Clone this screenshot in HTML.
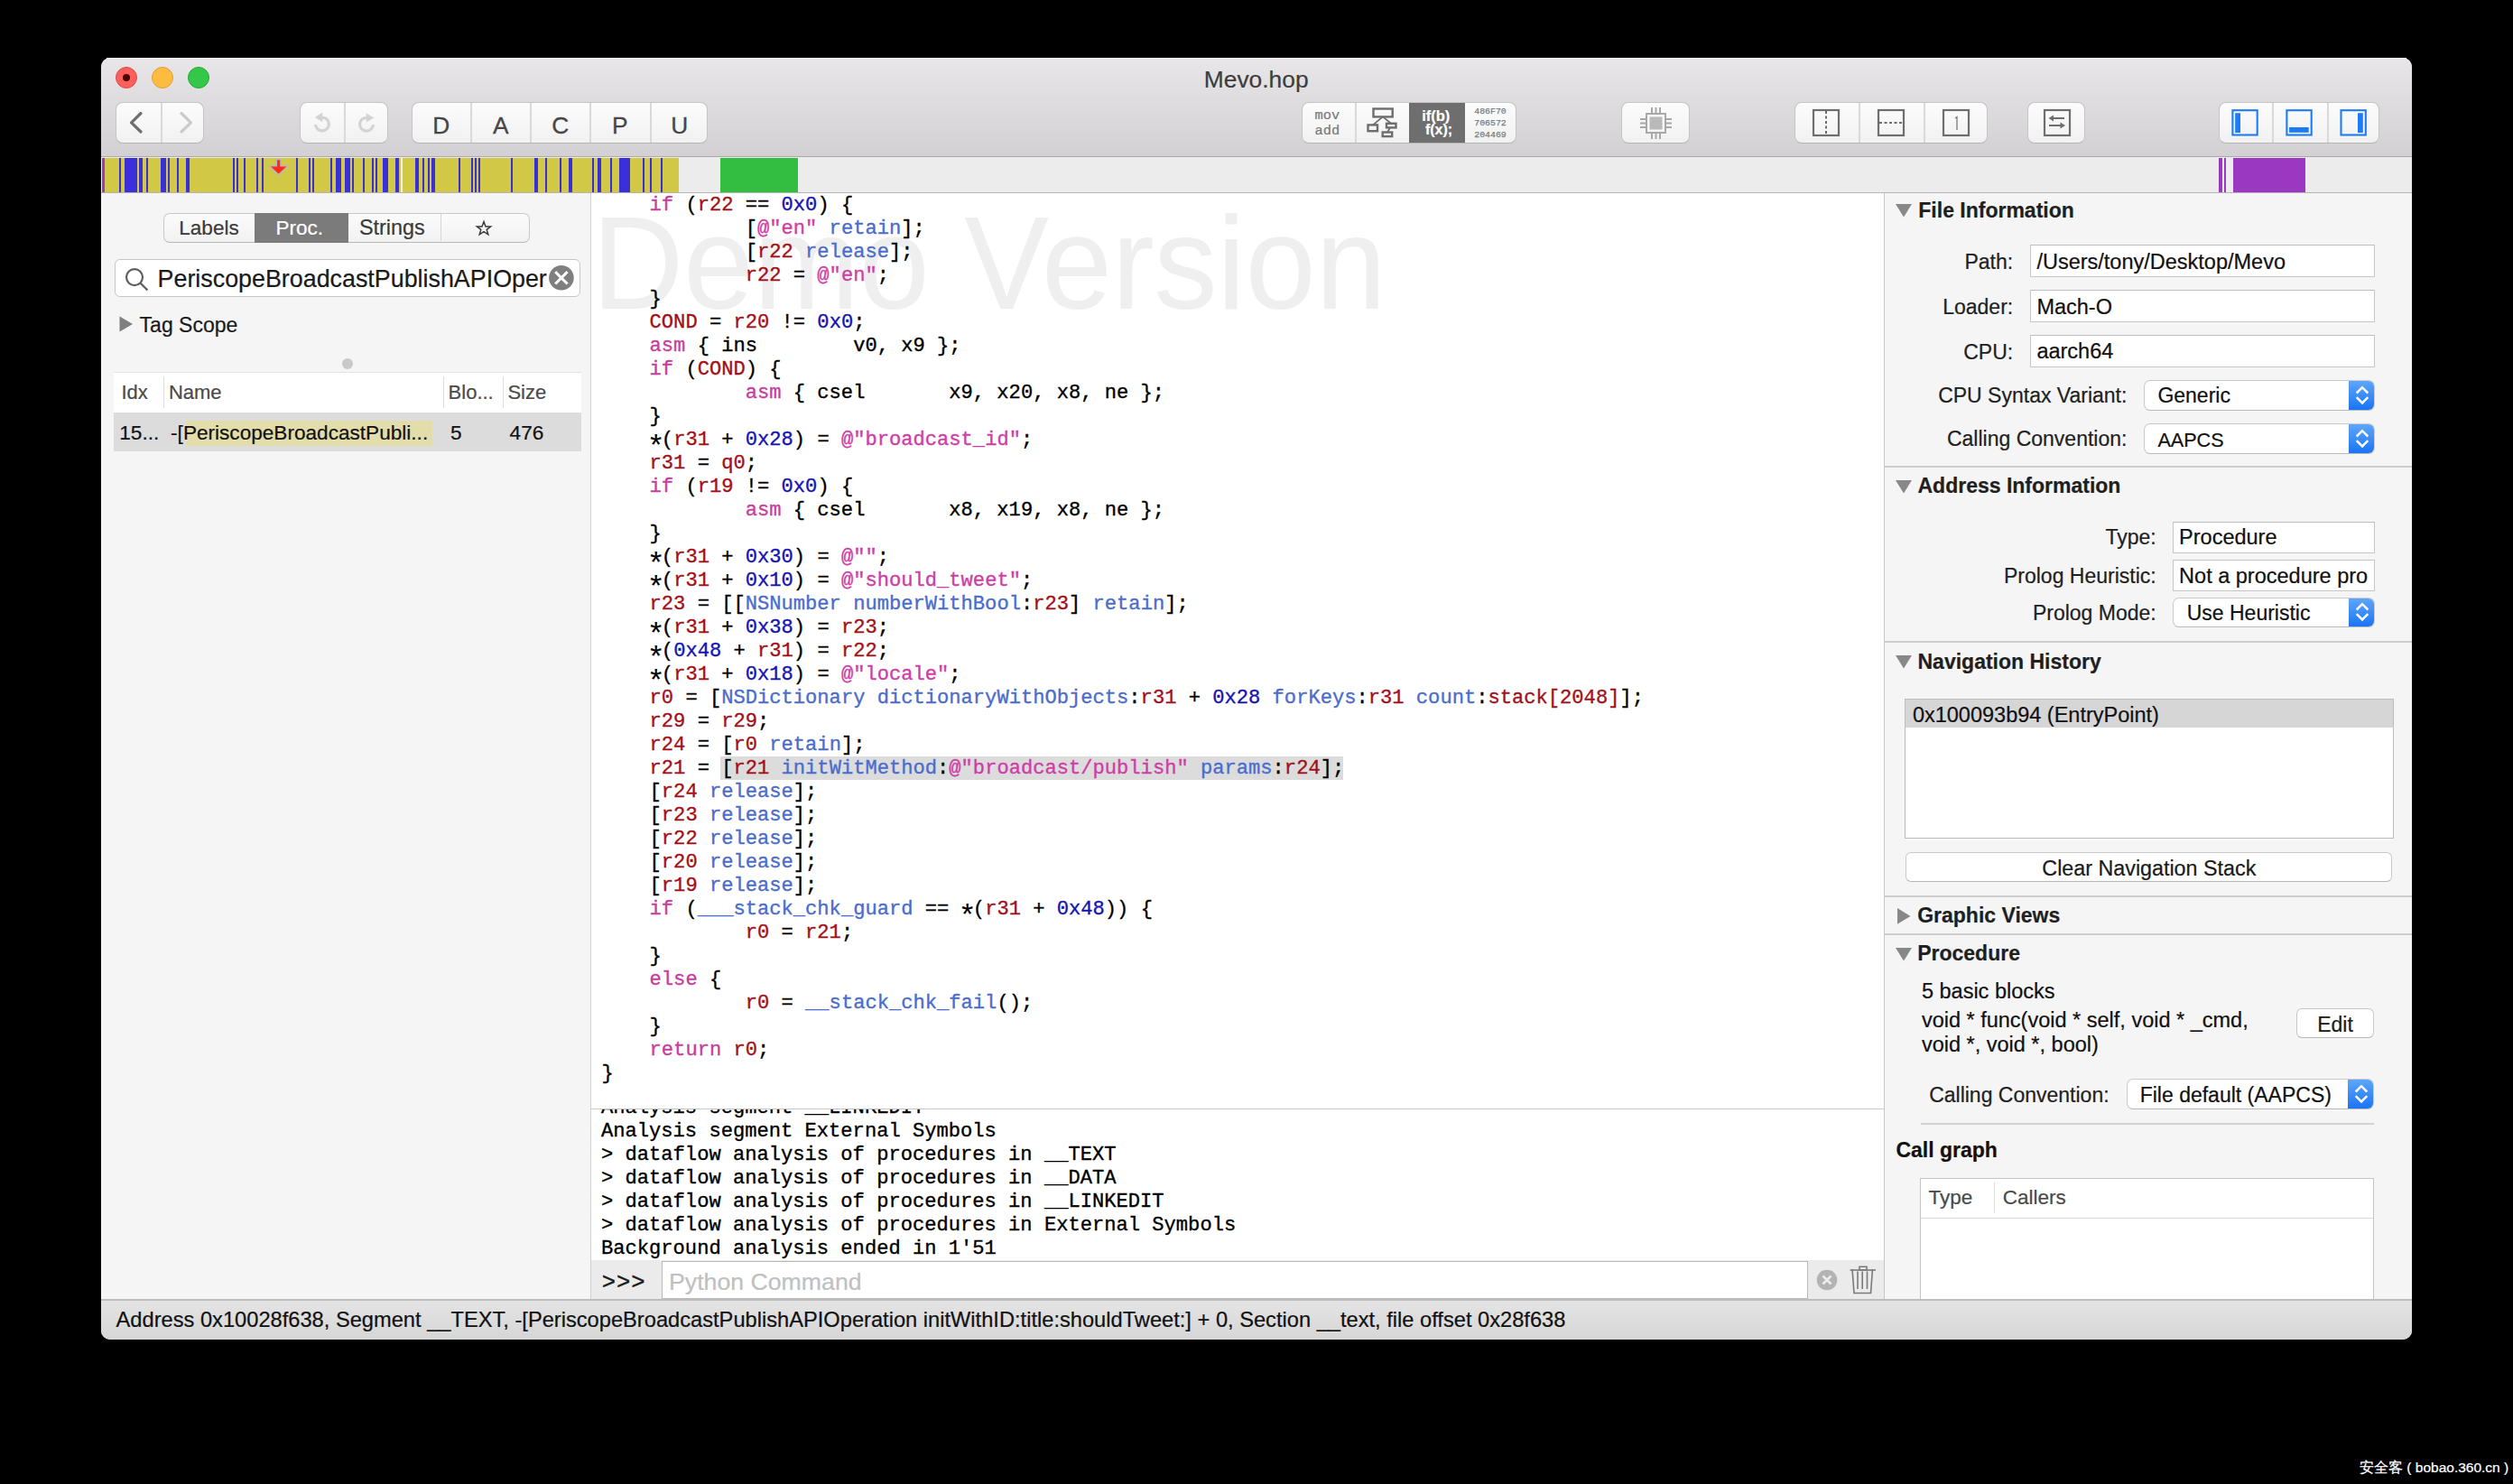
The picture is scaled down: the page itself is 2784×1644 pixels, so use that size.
<!DOCTYPE html><html><head><meta charset="utf-8"><style>
html,body{margin:0;padding:0;}
body{width:2784px;height:1644px;background:#000;position:relative;overflow:hidden;font-family:"Liberation Sans",sans-serif;}
.a{position:absolute;}
.t{position:absolute;white-space:pre;-webkit-text-stroke:0.22px currentColor;}
.btn{position:absolute;box-sizing:border-box;border:1px solid #c4c4c4;border-bottom-color:#b4b4b4;border-radius:8px;background:linear-gradient(#fcfcfc,#f1f1f1);}
.div{position:absolute;width:1px;background:#d6d6d6;}
.code{position:absolute;white-space:pre;font-family:"Liberation Mono",monospace;-webkit-text-stroke:0.35px currentColor;}
.ast{display:inline-block;transform-origin:50% 5.6px;transform:translateY(5.7px) scale(1.5);-webkit-text-stroke:0.1px currentColor;}
.k{color:#c83c9e}.r{color:#a30f17}.n{color:#1313b2}.m{color:#4a6ccd}.s{color:#d03ca6}
</style></head><body>

<div class="a" style="left:112px;top:64px;width:2560px;height:1420px;border-radius:10px;background:#f5f5f5;overflow:hidden;"></div>
<div class="a" style="left:112px;top:64px;width:2560px;height:110px;border-radius:10px 10px 0 0;background:linear-gradient(#e8e6e8,#d2d0d2);"></div>
<div class="a" style="left:118px;top:64px;width:2548px;height:1px;background:#f4f3f4;"></div>
<div class="a" style="left:112px;top:172.5px;width:2560px;height:2.0px;background:#aaa9aa;"></div>
<div class="a" style="left:128px;top:74px;width:24px;height:24px;box-sizing:border-box;border-radius:50%;background:#fc605c;border:1px solid #de4b47;"></div>
<div class="a" style="left:168px;top:74px;width:24px;height:24px;box-sizing:border-box;border-radius:50%;background:#fdbc40;border:1px solid #dea035;"></div>
<div class="a" style="left:208px;top:74px;width:24px;height:24px;box-sizing:border-box;border-radius:50%;background:#34c84a;border:1px solid #28a838;"></div>
<div class="a" style="left:136px;top:82px;width:8px;height:8px;border-radius:50%;background:#4d0000;"></div>
<div class="t" style="left:891.70px;width:1000px;text-align:center;top:74.65px;font-size:26.4px;line-height:26.4px;color:#3d3d3d;font-family:'Liberation Sans', sans-serif;">Mevo.hop</div>
<div class="btn" style="left:128px;top:113.2px;width:98px;height:45.39999999999999px;"></div>
<div class="div" style="left:177.5px;top:114.2px;width:2px;height:43.60000000000001px;background:#d9d9d9;"></div>
<svg class="a" style="left:141px;top:122px;" width="20" height="28" viewBox="0 0 20 28"><path d="M15 3.5 L4.5 13.8 L15 24" fill="none" stroke="#6e6e6e" stroke-width="3.2" stroke-linecap="round" stroke-linejoin="round"/></svg>
<svg class="a" style="left:196px;top:122px;" width="20" height="28" viewBox="0 0 20 28"><path d="M5 3.5 L15.5 13.8 L5 24" fill="none" stroke="#cbcbcb" stroke-width="3.2" stroke-linecap="round" stroke-linejoin="round"/></svg>
<div class="btn" style="left:331.6px;top:113.2px;width:98.39999999999998px;height:45.39999999999999px;"></div>
<div class="div" style="left:381.0px;top:114.2px;width:2px;height:43.60000000000001px;background:#d9d9d9;"></div>
<svg class="a" style="left:340px;top:118px;" width="80" height="36" viewBox="340 118 80 36"><g fill="none" stroke="#d3d3d3" stroke-width="3.2"><path d="M349.45 138 A7.45 7.45 0 1 0 357 130.05"/><path d="M413.45 138 A7.45 7.45 0 1 1 406 130.3"/></g><path d="M348.8 130 L357.2 124.8 L357.2 135.2 Z M414.2 130.5 L405.8 125.5 L405.8 135.5 Z" fill="#d3d3d3"/></svg>
<div class="btn" style="left:455.7px;top:113.2px;width:327.90000000000003px;height:45.39999999999999px;"></div>
<div class="div" style="left:521.3px;top:114.2px;width:2px;height:43.60000000000001px;background:#d9d9d9;"></div>
<div class="div" style="left:587.3px;top:114.2px;width:2px;height:43.60000000000001px;background:#d9d9d9;"></div>
<div class="div" style="left:653.4px;top:114.2px;width:2px;height:43.60000000000001px;background:#d9d9d9;"></div>
<div class="div" style="left:719.5px;top:114.2px;width:2px;height:43.60000000000001px;background:#d9d9d9;"></div>
<div class="t" style="left:-11.30px;width:1000px;text-align:center;top:125.53px;font-size:26.3px;line-height:26.3px;color:#474747;font-family:'Liberation Sans', sans-serif;-webkit-text-stroke:0.3px #474747;">D</div>
<div class="t" style="left:54.70px;width:1000px;text-align:center;top:125.53px;font-size:26.3px;line-height:26.3px;color:#474747;font-family:'Liberation Sans', sans-serif;-webkit-text-stroke:0.3px #474747;">A</div>
<div class="t" style="left:120.70px;width:1000px;text-align:center;top:125.53px;font-size:26.3px;line-height:26.3px;color:#474747;font-family:'Liberation Sans', sans-serif;-webkit-text-stroke:0.3px #474747;">C</div>
<div class="t" style="left:186.70px;width:1000px;text-align:center;top:125.53px;font-size:26.3px;line-height:26.3px;color:#474747;font-family:'Liberation Sans', sans-serif;-webkit-text-stroke:0.3px #474747;">P</div>
<div class="t" style="left:252.70px;width:1000px;text-align:center;top:125.53px;font-size:26.3px;line-height:26.3px;color:#474747;font-family:'Liberation Sans', sans-serif;-webkit-text-stroke:0.3px #474747;">U</div>
<div class="btn" style="left:1441.8px;top:113.2px;width:238.20000000000005px;height:45.39999999999999px;"></div>
<div class="div" style="left:1501.4px;top:114.2px;width:2px;height:43.60000000000001px;background:#d9d9d9;"></div>
<div class="a" style="left:1561px;top:113.7px;width:62px;height:44.60000000000001px;background:#6e6e6e;"></div>
<div class="t" style="left:1456.50px;top:137.50px;font-size:15.4px;line-height:15.4px;color:#7a7a7a;font-family:'Liberation Mono', monospace;">add</div>
<div class="t" style="left:1456.50px;top:121.00px;font-size:15.4px;line-height:15.4px;color:#7a7a7a;font-family:'Liberation Mono', monospace;">mov</div>
<svg class="a" style="left:1510px;top:116px;" width="42" height="40" viewBox="1510 116 42 40"><g fill="none" stroke="#6d6d6d" stroke-width="2.4"><rect x="1521.5" y="120.5" width="21.2" height="8.9"/><rect x="1515.5" y="138.4" width="10.5" height="6.8"/><rect x="1536" y="136.8" width="10.5" height="4.6"/><rect x="1531.7" y="146.5" width="10.5" height="4.6"/></g><path d="M1532 129.4 L1521 138.4 M1532 129.4 L1541 136.8 M1540 141.4 L1537 146.5" stroke="#6d6d6d" stroke-width="1.8" fill="none"/></svg>
<div class="t" style="left:1090.80px;width:1000px;text-align:center;top:119.83px;font-size:16.5px;line-height:16.5px;color:#fff;font-family:'Liberation Sans', sans-serif;font-weight:bold;">if(b)</div>
<div class="t" style="left:1094.00px;width:1000px;text-align:center;top:136.15px;font-size:16px;line-height:16px;color:#fff;font-family:'Liberation Sans', sans-serif;font-weight:bold;">f(x);</div>
<div class="t" style="left:1151.00px;width:1000px;text-align:center;top:119.32px;font-size:9.9px;line-height:9.9px;color:#7a7a7a;font-family:'Liberation Mono', monospace;-webkit-text-stroke:0.25px #7a7a7a;">486F70</div>
<div class="t" style="left:1151.00px;width:1000px;text-align:center;top:131.92px;font-size:9.9px;line-height:9.9px;color:#7a7a7a;font-family:'Liberation Mono', monospace;-webkit-text-stroke:0.25px #7a7a7a;">706572</div>
<div class="t" style="left:1151.00px;width:1000px;text-align:center;top:144.52px;font-size:9.9px;line-height:9.9px;color:#7a7a7a;font-family:'Liberation Mono', monospace;-webkit-text-stroke:0.25px #7a7a7a;">204469</div>
<div class="btn" style="left:1796px;top:113.2px;width:76px;height:45.39999999999999px;"></div>
<svg class="a" style="left:1815px;top:117px;" width="40" height="40" viewBox="0 0 40 40"><g stroke="#a8a8a8" stroke-width="2" fill="none"><rect x="9" y="9" width="21" height="21"/><path d="M15 2v7M19.5 2v7M24 2v7M15 30v7M19.5 30v7M24 30v7M2 15h7M2 19.5h7M2 24h7M30 15h7M30 19.5h7M30 24h7"/></g><rect x="12.5" y="12.5" width="14" height="14" fill="#b9b9b9"/></svg>
<div class="btn" style="left:1987.8px;top:113.2px;width:213.89999999999986px;height:45.39999999999999px;"></div>
<div class="div" style="left:2059.3px;top:114.2px;width:2px;height:43.60000000000001px;background:#d9d9d9;"></div>
<div class="div" style="left:2131.2px;top:114.2px;width:2px;height:43.60000000000001px;background:#d9d9d9;"></div>
<svg class="a" style="left:2007px;top:120px;" width="32" height="32" viewBox="0 0 32 32"><g fill="none" stroke="#6e6e6e" stroke-width="2.2"><rect x="2" y="2" width="28" height="28"/></g><path d="M16 3v26" stroke="#6e6e6e" stroke-width="2" stroke-dasharray="3 2.5"/></svg>
<svg class="a" style="left:2079px;top:120px;" width="32" height="32" viewBox="0 0 32 32"><g fill="none" stroke="#6e6e6e" stroke-width="2.2"><rect x="2" y="2" width="28" height="28"/></g><path d="M3 16h26" stroke="#6e6e6e" stroke-width="2" stroke-dasharray="3 2.5"/></svg>
<svg class="a" style="left:2151px;top:120px;" width="32" height="32" viewBox="0 0 32 32"><g fill="none" stroke="#6e6e6e" stroke-width="2.2"><rect x="2" y="2" width="28" height="28"/></g><path d="M15 11 L17 9.5 V24" fill="none" stroke="#7a7a7a" stroke-width="1.3"/></svg>
<div class="btn" style="left:2245.9px;top:113.2px;width:63.79999999999973px;height:45.39999999999999px;"></div>
<svg class="a" style="left:2263px;top:120px;" width="32" height="32" viewBox="0 0 32 32"><g fill="none" stroke="#6e6e6e" stroke-width="2.2"><rect x="2" y="2" width="28" height="28"/></g><path d="M9 11h15M7 19h16" stroke="#6e6e6e" stroke-width="2.2"/><path d="M6.5 11 L12 7.5 V14.5Z M25 19 L19.5 15.5 V22.5Z" fill="#6e6e6e"/></svg>
<div class="btn" style="left:2457.6px;top:113.2px;width:178.4000000000001px;height:45.39999999999999px;"></div>
<div class="div" style="left:2517.2px;top:114.2px;width:2px;height:43.60000000000001px;background:#d9d9d9;"></div>
<div class="div" style="left:2577.5px;top:114.2px;width:2px;height:43.60000000000001px;background:#d9d9d9;"></div>
<svg class="a" style="left:2465px;top:115px;" width="170" height="40" viewBox="2465 115 170 40"><g fill="none" stroke="#1b7cf6" stroke-width="2.1"><rect x="2473.4" y="122.2" width="27.3" height="27.3"/><rect x="2533.4" y="122.2" width="27.3" height="27.3"/><rect x="2593.5" y="122.2" width="27.3" height="27.3"/></g><g fill="#1b7cf6"><rect x="2476.2" y="125.2" width="5.8" height="21.8"/><rect x="2536.1" y="141" width="21.6" height="5.8"/><rect x="2612" y="125.2" width="5.8" height="21.8"/></g></svg>
<div class="a" style="left:112px;top:174px;width:2560px;height:39px;background:#ececec;"></div>
<div class="a" style="left:112px;top:213px;width:2560px;height:1px;background:#b5b5b5;"></div>
<div class="a" style="left:113px;top:175px;width:639px;height:38px;background:#d1c946;"></div>
<div class="a" style="left:113px;top:175px;width:3px;height:38px;background:#9a38c2;"></div>
<div class="a" style="left:132px;top:175px;width:2px;height:38px;background:#3b2fdc;"></div>
<div class="a" style="left:138px;top:175px;width:14px;height:38px;background:#3b2fdc;"></div>
<div class="a" style="left:154px;top:175px;width:4px;height:38px;background:#3b2fdc;"></div>
<div class="a" style="left:162px;top:175px;width:2px;height:38px;background:#3b2fdc;"></div>
<div class="a" style="left:178px;top:175px;width:6px;height:38px;background:#3b2fdc;"></div>
<div class="a" style="left:186px;top:175px;width:2px;height:38px;background:#3b2fdc;"></div>
<div class="a" style="left:196px;top:175px;width:2px;height:38px;background:#3b2fdc;"></div>
<div class="a" style="left:206px;top:175px;width:4px;height:38px;background:#3b2fdc;"></div>
<div class="a" style="left:258px;top:175px;width:2px;height:38px;background:#3b2fdc;"></div>
<div class="a" style="left:262px;top:175px;width:2px;height:38px;background:#3b2fdc;"></div>
<div class="a" style="left:270px;top:175px;width:2px;height:38px;background:#3b2fdc;"></div>
<div class="a" style="left:284px;top:175px;width:2px;height:38px;background:#3b2fdc;"></div>
<div class="a" style="left:290px;top:175px;width:2px;height:38px;background:#3b2fdc;"></div>
<div class="a" style="left:328px;top:175px;width:2px;height:38px;background:#3b2fdc;"></div>
<div class="a" style="left:342px;top:175px;width:2px;height:38px;background:#3b2fdc;"></div>
<div class="a" style="left:346px;top:175px;width:2px;height:38px;background:#3b2fdc;"></div>
<div class="a" style="left:366px;top:175px;width:2px;height:38px;background:#3b2fdc;"></div>
<div class="a" style="left:372px;top:175px;width:6px;height:38px;background:#3b2fdc;"></div>
<div class="a" style="left:382px;top:175px;width:6px;height:38px;background:#3b2fdc;"></div>
<div class="a" style="left:390px;top:175px;width:2px;height:38px;background:#3b2fdc;"></div>
<div class="a" style="left:402px;top:175px;width:2px;height:38px;background:#3b2fdc;"></div>
<div class="a" style="left:412px;top:175px;width:2px;height:38px;background:#3b2fdc;"></div>
<div class="a" style="left:416px;top:175px;width:2px;height:38px;background:#3b2fdc;"></div>
<div class="a" style="left:424px;top:175px;width:6px;height:38px;background:#3b2fdc;"></div>
<div class="a" style="left:438px;top:175px;width:4px;height:38px;background:#3b2fdc;"></div>
<div class="a" style="left:460px;top:175px;width:4px;height:38px;background:#3b2fdc;"></div>
<div class="a" style="left:468px;top:175px;width:2px;height:38px;background:#3b2fdc;"></div>
<div class="a" style="left:474px;top:175px;width:2px;height:38px;background:#3b2fdc;"></div>
<div class="a" style="left:478px;top:175px;width:4px;height:38px;background:#3b2fdc;"></div>
<div class="a" style="left:508px;top:175px;width:2px;height:38px;background:#3b2fdc;"></div>
<div class="a" style="left:522px;top:175px;width:2px;height:38px;background:#3b2fdc;"></div>
<div class="a" style="left:526px;top:175px;width:2px;height:38px;background:#3b2fdc;"></div>
<div class="a" style="left:530px;top:175px;width:2px;height:38px;background:#3b2fdc;"></div>
<div class="a" style="left:566px;top:175px;width:2px;height:38px;background:#3b2fdc;"></div>
<div class="a" style="left:592px;top:175px;width:4px;height:38px;background:#3b2fdc;"></div>
<div class="a" style="left:604px;top:175px;width:2px;height:38px;background:#3b2fdc;"></div>
<div class="a" style="left:620px;top:175px;width:2px;height:38px;background:#3b2fdc;"></div>
<div class="a" style="left:630px;top:175px;width:4px;height:38px;background:#3b2fdc;"></div>
<div class="a" style="left:656px;top:175px;width:2px;height:38px;background:#3b2fdc;"></div>
<div class="a" style="left:662px;top:175px;width:4px;height:38px;background:#3b2fdc;"></div>
<div class="a" style="left:676px;top:175px;width:2px;height:38px;background:#3b2fdc;"></div>
<div class="a" style="left:686px;top:175px;width:12px;height:38px;background:#3b2fdc;"></div>
<div class="a" style="left:712px;top:175px;width:2px;height:38px;background:#3b2fdc;"></div>
<div class="a" style="left:720px;top:175px;width:2px;height:38px;background:#3b2fdc;"></div>
<div class="a" style="left:732px;top:175px;width:2px;height:38px;background:#3b2fdc;"></div>
<div class="a" style="left:444px;top:175px;width:2px;height:38px;background:#efefef;"></div>
<div class="a" style="left:798px;top:175px;width:86px;height:38px;background:#33bd41;"></div>
<div class="a" style="left:2458px;top:175px;width:4px;height:38px;background:#9a38c2;"></div>
<div class="a" style="left:2464px;top:175px;width:2px;height:38px;background:#9a38c2;"></div>
<div class="a" style="left:2474px;top:175px;width:80px;height:38px;background:#9a38c2;"></div>
<svg class="a" style="left:294px;top:174px;" width="30" height="24" viewBox="294 174 30 24"><path d="M306.3 176.5 H311 V183.8 H319.2 L308.65 193.6 L298.1 183.8 H306.3 Z" fill="#ff2a1a" stroke="#b8b8b8" stroke-width="1.6" stroke-linejoin="miter"/></svg>
<div class="a" style="left:112px;top:214px;width:543px;height:1227px;background:#f5f5f5;"></div>
<div class="a" style="left:654px;top:214px;width:2px;height:1227px;background:#d0d0d0;"></div>
<div class="a" style="left:181px;top:235.6px;width:406px;height:33px;box-sizing:border-box;border:1px solid #c8c8c8;border-bottom-color:#b8b8b8;border-radius:7px;background:linear-gradient(#fbfbfb,#f2f2f2);"></div>
<div class="a" style="left:282px;top:235.6px;width:104px;height:33.00000000000003px;background:#7b7b7b;"></div>
<div class="div" style="left:487.7px;top:237px;height:30px;background:#d6d6d6;"></div>
<div class="t" style="left:-268.50px;width:1000px;text-align:center;top:242.15px;font-size:22.5px;line-height:22.5px;color:#3a3a3a;font-family:'Liberation Sans', sans-serif;">Labels</div>
<div class="t" style="left:-168.20px;width:1000px;text-align:center;top:242.15px;font-size:22.5px;line-height:22.5px;color:#fff;font-family:'Liberation Sans', sans-serif;">Proc.</div>
<div class="t" style="left:-65.70px;width:1000px;text-align:center;top:241.39px;font-size:23.4px;line-height:23.4px;color:#3a3a3a;font-family:'Liberation Sans', sans-serif;">Strings</div>
<svg class="a" style="left:526px;top:243px;" width="20" height="20" viewBox="0 0 20 20"><path d="M10 2.6 L12 7.9 L17.6 8 L13.2 11.4 L14.8 16.8 L10 13.6 L5.2 16.8 L6.8 11.4 L2.4 8 L8 7.9 Z" fill="none" stroke="#3a3a3a" stroke-width="1.5" stroke-linejoin="miter"/></svg>
<div class="a" style="left:127.4px;top:287.2px;width:515.2px;height:41.5px;box-sizing:border-box;border:1px solid #c6c6c6;border-radius:6px;background:#fff;"></div>
<svg class="a" style="left:134px;top:292px;" width="34" height="34" viewBox="134 292 34 34"><circle cx="149" cy="307.1" r="9" fill="none" stroke="#5e5e5e" stroke-width="2.2"/><path d="M155.4 313.5 L163.4 321.5" stroke="#5e5e5e" stroke-width="2.4"/></svg>
<div class="t" style="left:174.60px;top:296.47px;font-size:26.85px;line-height:26.85px;color:#1a1a1a;font-family:'Liberation Sans', sans-serif;">PeriscopeBroadcastPublishAPIOper</div>
<svg class="a" style="left:606px;top:292px;" width="32" height="32" viewBox="606 292 32 32"><circle cx="621.9" cy="307.8" r="13.8" fill="#7f7f7f"/><path d="M615.2 301.1 L628.6 314.5 M628.6 301.1 L615.2 314.5" stroke="#fff" stroke-width="3"/></svg>
<svg class="a" style="left:131px;top:349px;" width="18" height="20" viewBox="0 0 18 20"><path d="M1.5 1.5 L16 10 L1.5 18.5 Z" fill="#7f7f7f"/></svg>
<div class="t" style="left:154.60px;top:348.73px;font-size:23px;line-height:23px;color:#1a1a1a;font-family:'Liberation Sans', sans-serif;">Tag Scope</div>
<div class="a" style="left:379px;top:397px;width:12px;height:12px;border-radius:50%;background:#c9c9c9;"></div>
<div class="a" style="left:126px;top:412px;width:518px;height:45px;background:#fff;"></div>
<div class="a" style="left:126px;top:412px;width:518px;height:1px;background:#e3e3e3;"></div>
<div class="div" style="left:181px;top:417px;height:35px;background:#dedede;"></div>
<div class="div" style="left:490.6px;top:417px;height:35px;background:#dedede;"></div>
<div class="div" style="left:556.8px;top:417px;height:35px;background:#dedede;"></div>
<div class="t" style="left:134.50px;top:424.37px;font-size:22px;line-height:22px;color:#4a4a4a;font-family:'Liberation Sans', sans-serif;">Idx</div>
<div class="t" style="left:186.90px;top:424.37px;font-size:22px;line-height:22px;color:#4a4a4a;font-family:'Liberation Sans', sans-serif;">Name</div>
<div class="t" style="left:496.60px;top:424.37px;font-size:22px;line-height:22px;color:#4a4a4a;font-family:'Liberation Sans', sans-serif;">Blo...</div>
<div class="t" style="left:562.40px;top:424.37px;font-size:22px;line-height:22px;color:#4a4a4a;font-family:'Liberation Sans', sans-serif;">Size</div>
<div class="a" style="left:126px;top:457px;width:518px;height:43px;background:#dcdcdc;"></div>
<div class="a" style="left:205.8px;top:466px;width:273.0px;height:27.5px;background:#e3dcab;"></div>
<div class="t" style="left:132.30px;top:469.47px;font-size:22.6px;line-height:22.6px;color:#111;font-family:'Liberation Sans', sans-serif;">15...</div>
<div class="t" style="left:189.10px;top:469.47px;font-size:22.6px;line-height:22.6px;color:#111;font-family:'Liberation Sans', sans-serif;">-[PeriscopeBroadcastPubli...</div>
<div class="t" style="left:498.90px;top:469.47px;font-size:22.6px;line-height:22.6px;color:#111;font-family:'Liberation Sans', sans-serif;">5</div>
<div class="t" style="left:564.60px;top:469.47px;font-size:22.6px;line-height:22.6px;color:#111;font-family:'Liberation Sans', sans-serif;">476</div>
<div class="a" style="left:655px;top:214px;width:1432px;height:1015px;background:#fff;overflow:hidden;"></div>
<div class="t" style="left:656.10px;top:223.76px;font-size:140px;line-height:140px;color:#efefef;font-family:'Liberation Sans', sans-serif;transform:scaleY(1.042);transform-origin:0 118.5px;">Demo Version</div>
<div class="a" style="left:797.7px;top:838px;width:690.0999999999999px;height:26px;background:#dcdcdc;"></div>
<div class="code" style="left:666.5px;top:215.2px;font-size:22.11px;line-height:26px;color:#000;">    <span class="k">if</span> (<span class="r">r22</span> == <span class="n">0x0</span>) {
            [<span class="s">@&quot;en&quot;</span> <span class="m">retain</span>];
            [<span class="r">r22</span> <span class="m">release</span>];
            <span class="r">r22</span> = <span class="s">@&quot;en&quot;</span>;
    }
    <span class="r">COND</span> = <span class="r">r20</span> != <span class="n">0x0</span>;
    <span class="k">asm</span> { ins        v0, x9 };
    <span class="k">if</span> (<span class="r">COND</span>) {
            <span class="k">asm</span> { csel       x9, x20, x8, ne };
    }
    <span class="ast">*</span>(<span class="r">r31</span> + <span class="n">0x28</span>) = <span class="s">@&quot;broadcast_id&quot;</span>;
    <span class="r">r31</span> = <span class="r">q0</span>;
    <span class="k">if</span> (<span class="r">r19</span> != <span class="n">0x0</span>) {
            <span class="k">asm</span> { csel       x8, x19, x8, ne };
    }
    <span class="ast">*</span>(<span class="r">r31</span> + <span class="n">0x30</span>) = <span class="s">@&quot;&quot;</span>;
    <span class="ast">*</span>(<span class="r">r31</span> + <span class="n">0x10</span>) = <span class="s">@&quot;should_tweet&quot;</span>;
    <span class="r">r23</span> = [[<span class="m">NSNumber</span> <span class="m">numberWithBool</span>:<span class="r">r23</span>] <span class="m">retain</span>];
    <span class="ast">*</span>(<span class="r">r31</span> + <span class="n">0x38</span>) = <span class="r">r23</span>;
    <span class="ast">*</span>(<span class="n">0x48</span> + <span class="r">r31</span>) = <span class="r">r22</span>;
    <span class="ast">*</span>(<span class="r">r31</span> + <span class="n">0x18</span>) = <span class="s">@&quot;locale&quot;</span>;
    <span class="r">r0</span> = [<span class="m">NSDictionary</span> <span class="m">dictionaryWithObjects</span>:<span class="r">r31</span> + <span class="n">0x28</span> <span class="m">forKeys</span>:<span class="r">r31</span> <span class="m">count</span>:<span class="r">stack[2048]</span>];
    <span class="r">r29</span> = <span class="r">r29</span>;
    <span class="r">r24</span> = [<span class="r">r0</span> <span class="m">retain</span>];
    <span class="r">r21</span> = [<span class="r">r21</span> <span class="m">initWitMethod</span>:<span class="s">@&quot;broadcast/publish&quot;</span> <span class="m">params</span>:<span class="r">r24</span>];
    [<span class="r">r24</span> <span class="m">release</span>];
    [<span class="r">r23</span> <span class="m">release</span>];
    [<span class="r">r22</span> <span class="m">release</span>];
    [<span class="r">r20</span> <span class="m">release</span>];
    [<span class="r">r19</span> <span class="m">release</span>];
    <span class="k">if</span> (<span class="m">___stack_chk_guard</span> == <span class="ast">*</span>(<span class="r">r31</span> + <span class="n">0x48</span>)) {
            <span class="r">r0</span> = <span class="r">r21</span>;
    }
    <span class="k">else</span> {
            <span class="r">r0</span> = <span class="m">__stack_chk_fail</span>();
    }
    <span class="k">return</span> <span class="r">r0</span>;
}</div>
<div class="a" style="left:655px;top:1228px;width:1432px;height:1px;background:#c8c8c8;"></div>
<div class="a" style="left:655px;top:1229px;width:1432px;height:167px;background:#fff;"></div>
<div class="a" style="left:655px;top:1229px;width:1432px;height:167px;overflow:hidden;">
<div class="code" style="left:11px;top:-14px;font-size:22.11px;line-height:26px;color:#000;">Analysis segment __LINKEDIT
Analysis segment External Symbols
&gt; dataflow analysis of procedures in __TEXT
&gt; dataflow analysis of procedures in __DATA
&gt; dataflow analysis of procedures in __LINKEDIT
&gt; dataflow analysis of procedures in External Symbols
Background analysis ended in 1&#x27;51</div>
</div>
<div class="a" style="left:655px;top:1396px;width:1432px;height:45px;background:#ebebeb;"></div>
<div class="t" style="left:666.80px;top:1409.06px;font-size:25.5px;line-height:25.5px;color:#1a1a1a;font-family:'Liberation Mono', monospace;letter-spacing:0.9px;-webkit-text-stroke:0.4px #1a1a1a;">&gt;&gt;&gt;</div>
<div class="a" style="left:733px;top:1397.2px;width:1269.7px;height:41.7px;box-sizing:border-box;border:1px solid #b9b9b9;background:#fff;"></div>
<div class="t" style="left:741.00px;top:1407.29px;font-size:26.7px;line-height:26.7px;color:#c0c0c0;font-family:'Liberation Sans', sans-serif;">Python Command</div>
<svg class="a" style="left:2012px;top:1406px;" width="24" height="24" viewBox="0 0 24 24"><circle cx="12" cy="12" r="11.3" fill="#b3b3b3"/><path d="M7.5 7.5 L16.5 16.5 M16.5 7.5 L7.5 16.5" stroke="#ececec" stroke-width="2.6"/></svg>
<svg class="a" style="left:2048px;top:1401px;" width="32" height="34" viewBox="0 0 32 34"><g fill="none" stroke="#7b7b7b" stroke-width="1.6"><path d="M1.5 6 H30"/><rect x="12" y="2.3" width="8" height="3.5"/><path d="M4 5 L6 31.5 H24.5 L26.5 5"/><path d="M10 7.5 V27 M15.2 7.5 V27 M20.5 7.5 V27"/></g></svg>
<div class="a" style="left:2087px;top:214px;width:585px;height:1227px;background:#f5f5f5;"></div>
<div class="a" style="left:2086.5px;top:214px;width:1.0px;height:1227px;background:#c6c6c6;"></div>
<svg class="a" style="left:2100px;top:224.2px;" width="19" height="18" viewBox="0 0 19 18"><path d="M0 2 H18 L9 16.6 Z" fill="#888888"/></svg>
<div class="t" style="left:2125.30px;top:221.73px;font-size:23px;line-height:23px;color:#1f1f1f;font-family:'Liberation Sans', sans-serif;font-weight:bold;">File Information</div>
<div class="t" style="left:1230.20px;width:1000px;text-align:right;top:279.33px;font-size:23px;line-height:23px;color:#1f1f1f;font-family:'Liberation Sans', sans-serif;">Path:</div>
<div class="a" style="left:2249px;top:271px;width:382px;height:36px;box-sizing:border-box;border:1px solid #c6c6c6;border-top-color:#bdbdbd;background:#fff;"></div>
<div class="t" style="left:2256.40px;top:278.90px;font-size:23.5px;line-height:23.5px;color:#111;font-family:'Liberation Sans', sans-serif;">/Users/tony/Desktop/Mevo</div>
<div class="t" style="left:1230.20px;width:1000px;text-align:right;top:329.03px;font-size:23px;line-height:23px;color:#1f1f1f;font-family:'Liberation Sans', sans-serif;">Loader:</div>
<div class="a" style="left:2249px;top:321px;width:382px;height:36px;box-sizing:border-box;border:1px solid #c6c6c6;border-top-color:#bdbdbd;background:#fff;"></div>
<div class="t" style="left:2256.40px;top:328.60px;font-size:23.5px;line-height:23.5px;color:#111;font-family:'Liberation Sans', sans-serif;">Mach-O</div>
<div class="t" style="left:1230.20px;width:1000px;text-align:right;top:378.73px;font-size:23px;line-height:23px;color:#1f1f1f;font-family:'Liberation Sans', sans-serif;">CPU:</div>
<div class="a" style="left:2249px;top:371px;width:382px;height:36px;box-sizing:border-box;border:1px solid #c6c6c6;border-top-color:#bdbdbd;background:#fff;"></div>
<div class="t" style="left:2256.40px;top:378.30px;font-size:23.5px;line-height:23.5px;color:#111;font-family:'Liberation Sans', sans-serif;">aarch64</div>
<div class="t" style="left:1356.40px;width:1000px;text-align:right;top:427.33px;font-size:23px;line-height:23px;color:#1f1f1f;font-family:'Liberation Sans', sans-serif;">CPU Syntax Variant:</div>
<div class="a" style="left:2375.4px;top:421.4px;width:255.79999999999973px;height:33.60000000000002px;box-sizing:border-box;border:1px solid #cbcbcb;border-bottom-color:#b9b9b9;border-radius:7px;background:#fff;overflow:hidden;"><div class="a" style="right:0;top:0;width:28.5px;height:100%;background:linear-gradient(#5ea6fa,#1a74f4);"></div></div>
<svg class="a" style="left:2607.8999999999996px;top:426.2px;" width="18" height="24" viewBox="0 0 18 24"><path d="M2.7 9.5 L9 3.2 L15.3 9.5 M2.7 14.2 L9 20.5 L15.3 14.2" fill="none" stroke="#fff" stroke-width="2.5"/></svg>
<div class="t" style="left:2390.40px;top:427.33px;font-size:23px;line-height:23px;color:#111;font-family:'Liberation Sans', sans-serif;">Generic</div>
<div class="t" style="left:1356.40px;width:1000px;text-align:right;top:475.43px;font-size:23px;line-height:23px;color:#1f1f1f;font-family:'Liberation Sans', sans-serif;">Calling Convention:</div>
<div class="a" style="left:2375.4px;top:469.4px;width:255.79999999999973px;height:33.60000000000002px;box-sizing:border-box;border:1px solid #cbcbcb;border-bottom-color:#b9b9b9;border-radius:7px;background:#fff;overflow:hidden;"><div class="a" style="right:0;top:0;width:28.5px;height:100%;background:linear-gradient(#5ea6fa,#1a74f4);"></div></div>
<svg class="a" style="left:2607.8999999999996px;top:474.2px;" width="18" height="24" viewBox="0 0 18 24"><path d="M2.7 9.5 L9 3.2 L15.3 9.5 M2.7 14.2 L9 20.5 L15.3 14.2" fill="none" stroke="#fff" stroke-width="2.5"/></svg>
<div class="t" style="left:2390.40px;top:476.61px;font-size:21.6px;line-height:21.6px;color:#111;font-family:'Liberation Sans', sans-serif;">AAPCS</div>
<div class="a" style="left:2087px;top:516px;width:585px;height:2px;background:#cecece;"></div>
<svg class="a" style="left:2100px;top:529.5px;" width="19" height="18" viewBox="0 0 19 18"><path d="M0 2 H18 L9 16.6 Z" fill="#888888"/></svg>
<div class="t" style="left:2124.50px;top:527.43px;font-size:23px;line-height:23px;color:#1f1f1f;font-family:'Liberation Sans', sans-serif;font-weight:bold;">Address Information</div>
<div class="t" style="left:1388.70px;width:1000px;text-align:right;top:584.23px;font-size:23px;line-height:23px;color:#1f1f1f;font-family:'Liberation Sans', sans-serif;">Type:</div>
<div class="a" style="left:2407px;top:578px;width:224px;height:34.5px;box-sizing:border-box;border:1px solid #c6c6c6;border-top-color:#bdbdbd;background:#fff;"></div>
<div class="t" style="left:2414.10px;top:583.80px;font-size:23.5px;line-height:23.5px;color:#111;font-family:'Liberation Sans', sans-serif;">Procedure</div>
<div class="t" style="left:1388.70px;width:1000px;text-align:right;top:627.13px;font-size:23px;line-height:23px;color:#1f1f1f;font-family:'Liberation Sans', sans-serif;">Prolog Heuristic:</div>
<div class="a" style="left:2407px;top:620px;width:224px;height:34.5px;overflow:hidden;box-sizing:border-box;border:1px solid #c6c6c6;background:#fff;"></div>
<div class="a" style="left:2408px;top:621px;width:222px;height:32px;overflow:hidden;">
<div class="t" style="left:6.10px;top:5.70px;font-size:23.5px;line-height:23.5px;color:#111;font-family:'Liberation Sans', sans-serif;">Not a procedure pro</div>
</div>
<div class="t" style="left:1388.70px;width:1000px;text-align:right;top:667.73px;font-size:23px;line-height:23px;color:#1f1f1f;font-family:'Liberation Sans', sans-serif;">Prolog Mode:</div>
<div class="a" style="left:2407px;top:662px;width:224px;height:32.5px;box-sizing:border-box;border:1px solid #cbcbcb;border-bottom-color:#b9b9b9;border-radius:7px;background:#fff;overflow:hidden;"><div class="a" style="right:0;top:0;width:28.5px;height:100%;background:linear-gradient(#5ea6fa,#1a74f4);"></div></div>
<svg class="a" style="left:2607.7px;top:666.25px;" width="18" height="24" viewBox="0 0 18 24"><path d="M2.7 9.5 L9 3.2 L15.3 9.5 M2.7 14.2 L9 20.5 L15.3 14.2" fill="none" stroke="#fff" stroke-width="2.5"/></svg>
<div class="t" style="left:2422.70px;top:667.73px;font-size:23px;line-height:23px;color:#111;font-family:'Liberation Sans', sans-serif;">Use Heuristic</div>
<div class="a" style="left:2087px;top:710px;width:585px;height:2px;background:#cecece;"></div>
<svg class="a" style="left:2100px;top:724.3px;" width="19" height="18" viewBox="0 0 19 18"><path d="M0 2 H18 L9 16.6 Z" fill="#888888"/></svg>
<div class="t" style="left:2124.50px;top:721.93px;font-size:23px;line-height:23px;color:#1f1f1f;font-family:'Liberation Sans', sans-serif;font-weight:bold;">Navigation History</div>
<div class="a" style="left:2110.3px;top:774.2px;width:541.6px;height:155.2px;box-sizing:border-box;border:1px solid #bcbcbc;background:#fff;"></div>
<div class="a" style="left:2111.3px;top:775.2px;width:539.6999999999998px;height:30.399999999999977px;background:#d6d6d6;"></div>
<div class="t" style="left:2118.90px;top:781.30px;font-size:23.5px;line-height:23.5px;color:#111;font-family:'Liberation Sans', sans-serif;">0x100093b94 (EntryPoint)</div>
<div class="a" style="left:2111.3px;top:944.3px;width:539px;height:33px;box-sizing:border-box;border:1px solid #c9c9c9;border-bottom-color:#b7b7b7;border-radius:6px;background:#fff;"></div>
<div class="t" style="left:1880.80px;width:1000px;text-align:center;top:951.47px;font-size:23.3px;line-height:23.3px;color:#1a1a1a;font-family:'Liberation Sans', sans-serif;">Clear Navigation Stack</div>
<div class="a" style="left:2087px;top:992px;width:585px;height:2px;background:#cecece;"></div>
<svg class="a" style="left:2101px;top:1005px;" width="17" height="20" viewBox="0 0 17 20"><path d="M1 0.9 L15.5 9.9 L1 18.8 Z" fill="#888888"/></svg>
<div class="t" style="left:2124.20px;top:1002.73px;font-size:23px;line-height:23px;color:#1f1f1f;font-family:'Liberation Sans', sans-serif;font-weight:bold;">Graphic Views</div>
<div class="a" style="left:2087px;top:1034px;width:585px;height:2px;background:#cecece;"></div>
<svg class="a" style="left:2100px;top:1047.8px;" width="19" height="18" viewBox="0 0 19 18"><path d="M0 2 H18 L9 16.6 Z" fill="#888888"/></svg>
<div class="t" style="left:2124.20px;top:1045.23px;font-size:23px;line-height:23px;color:#1f1f1f;font-family:'Liberation Sans', sans-serif;font-weight:bold;">Procedure</div>
<div class="t" style="left:2128.90px;top:1086.60px;font-size:23.5px;line-height:23.5px;color:#111;font-family:'Liberation Sans', sans-serif;">5 basic blocks</div>
<div class="t" style="left:2128.90px;top:1118.50px;font-size:23.5px;line-height:23.5px;color:#111;font-family:'Liberation Sans', sans-serif;">void * func(void * self, void * _cmd,</div>
<div class="t" style="left:2128.90px;top:1146.40px;font-size:23.5px;line-height:23.5px;color:#111;font-family:'Liberation Sans', sans-serif;">void *, void *, bool)</div>
<div class="a" style="left:2543.6px;top:1116.5px;width:86.8px;height:33px;box-sizing:border-box;border:1px solid #c9c9c9;border-bottom-color:#b7b7b7;border-radius:6px;background:#fff;"></div>
<div class="t" style="left:2087.00px;width:1000px;text-align:center;top:1123.63px;font-size:23px;line-height:23px;color:#1a1a1a;font-family:'Liberation Sans', sans-serif;">Edit</div>
<div class="t" style="left:1336.60px;width:1000px;text-align:right;top:1201.73px;font-size:23px;line-height:23px;color:#1f1f1f;font-family:'Liberation Sans', sans-serif;">Calling Convention:</div>
<div class="a" style="left:2355.8px;top:1195.2px;width:274.5999999999999px;height:33.5px;box-sizing:border-box;border:1px solid #cbcbcb;border-bottom-color:#b9b9b9;border-radius:7px;background:#fff;overflow:hidden;"><div class="a" style="right:0;top:0;width:28.5px;height:100%;background:linear-gradient(#5ea6fa,#1a74f4);"></div></div>
<svg class="a" style="left:2607.1px;top:1199.95px;" width="18" height="24" viewBox="0 0 18 24"><path d="M2.7 9.5 L9 3.2 L15.3 9.5 M2.7 14.2 L9 20.5 L15.3 14.2" fill="none" stroke="#fff" stroke-width="2.5"/></svg>
<div class="t" style="left:2370.70px;top:1201.73px;font-size:23px;line-height:23px;color:#111;font-family:'Liberation Sans', sans-serif;">File default (AAPCS)</div>
<div class="a" style="left:2128px;top:1244px;width:502px;height:2px;background:#d2d2d2;"></div>
<div class="t" style="left:2100.40px;top:1263.13px;font-size:23px;line-height:23px;color:#111;font-family:'Liberation Sans', sans-serif;font-weight:bold;">Call graph</div>
<div class="a" style="left:2126.7px;top:1304.6px;width:503px;height:150px;box-sizing:border-box;border:1px solid #c4c4c4;background:#fff;"></div>
<div class="a" style="left:2127.7px;top:1349px;width:501.8000000000002px;height:1px;background:#d8d8d8;"></div>
<div class="div" style="left:2208.9px;top:1310px;height:34px;background:#dedede;"></div>
<div class="t" style="left:2136.60px;top:1315.65px;font-size:22.5px;line-height:22.5px;color:#4a4a4a;font-family:'Liberation Sans', sans-serif;">Type</div>
<div class="t" style="left:2218.80px;top:1315.65px;font-size:22.5px;line-height:22.5px;color:#4a4a4a;font-family:'Liberation Sans', sans-serif;">Callers</div>
<div class="a" style="left:112px;top:1439px;width:2560px;height:2px;background:#bdbdbd;"></div>
<div class="a" style="left:112px;top:1441px;width:2560px;height:43px;border-radius:0 0 10px 10px;background:linear-gradient(#e4e4e4,#d6d6d6);"></div>
<div class="t" style="left:128.60px;top:1450.67px;font-size:23.66px;line-height:23.66px;color:#111;font-family:'Liberation Sans', sans-serif;">Address 0x10028f638, Segment __TEXT, -[PeriscopeBroadcastPublishAPIOperation initWithID:title:shouldTweet:] + 0, Section __text, file offset 0x28f638</div>
<div class="t" style="left:2614.00px;top:1617.88px;font-size:15.5px;line-height:15.5px;color:#fff;font-family:'Liberation Sans', sans-serif;">安全客 ( bobao.360.cn )</div>
</body></html>
